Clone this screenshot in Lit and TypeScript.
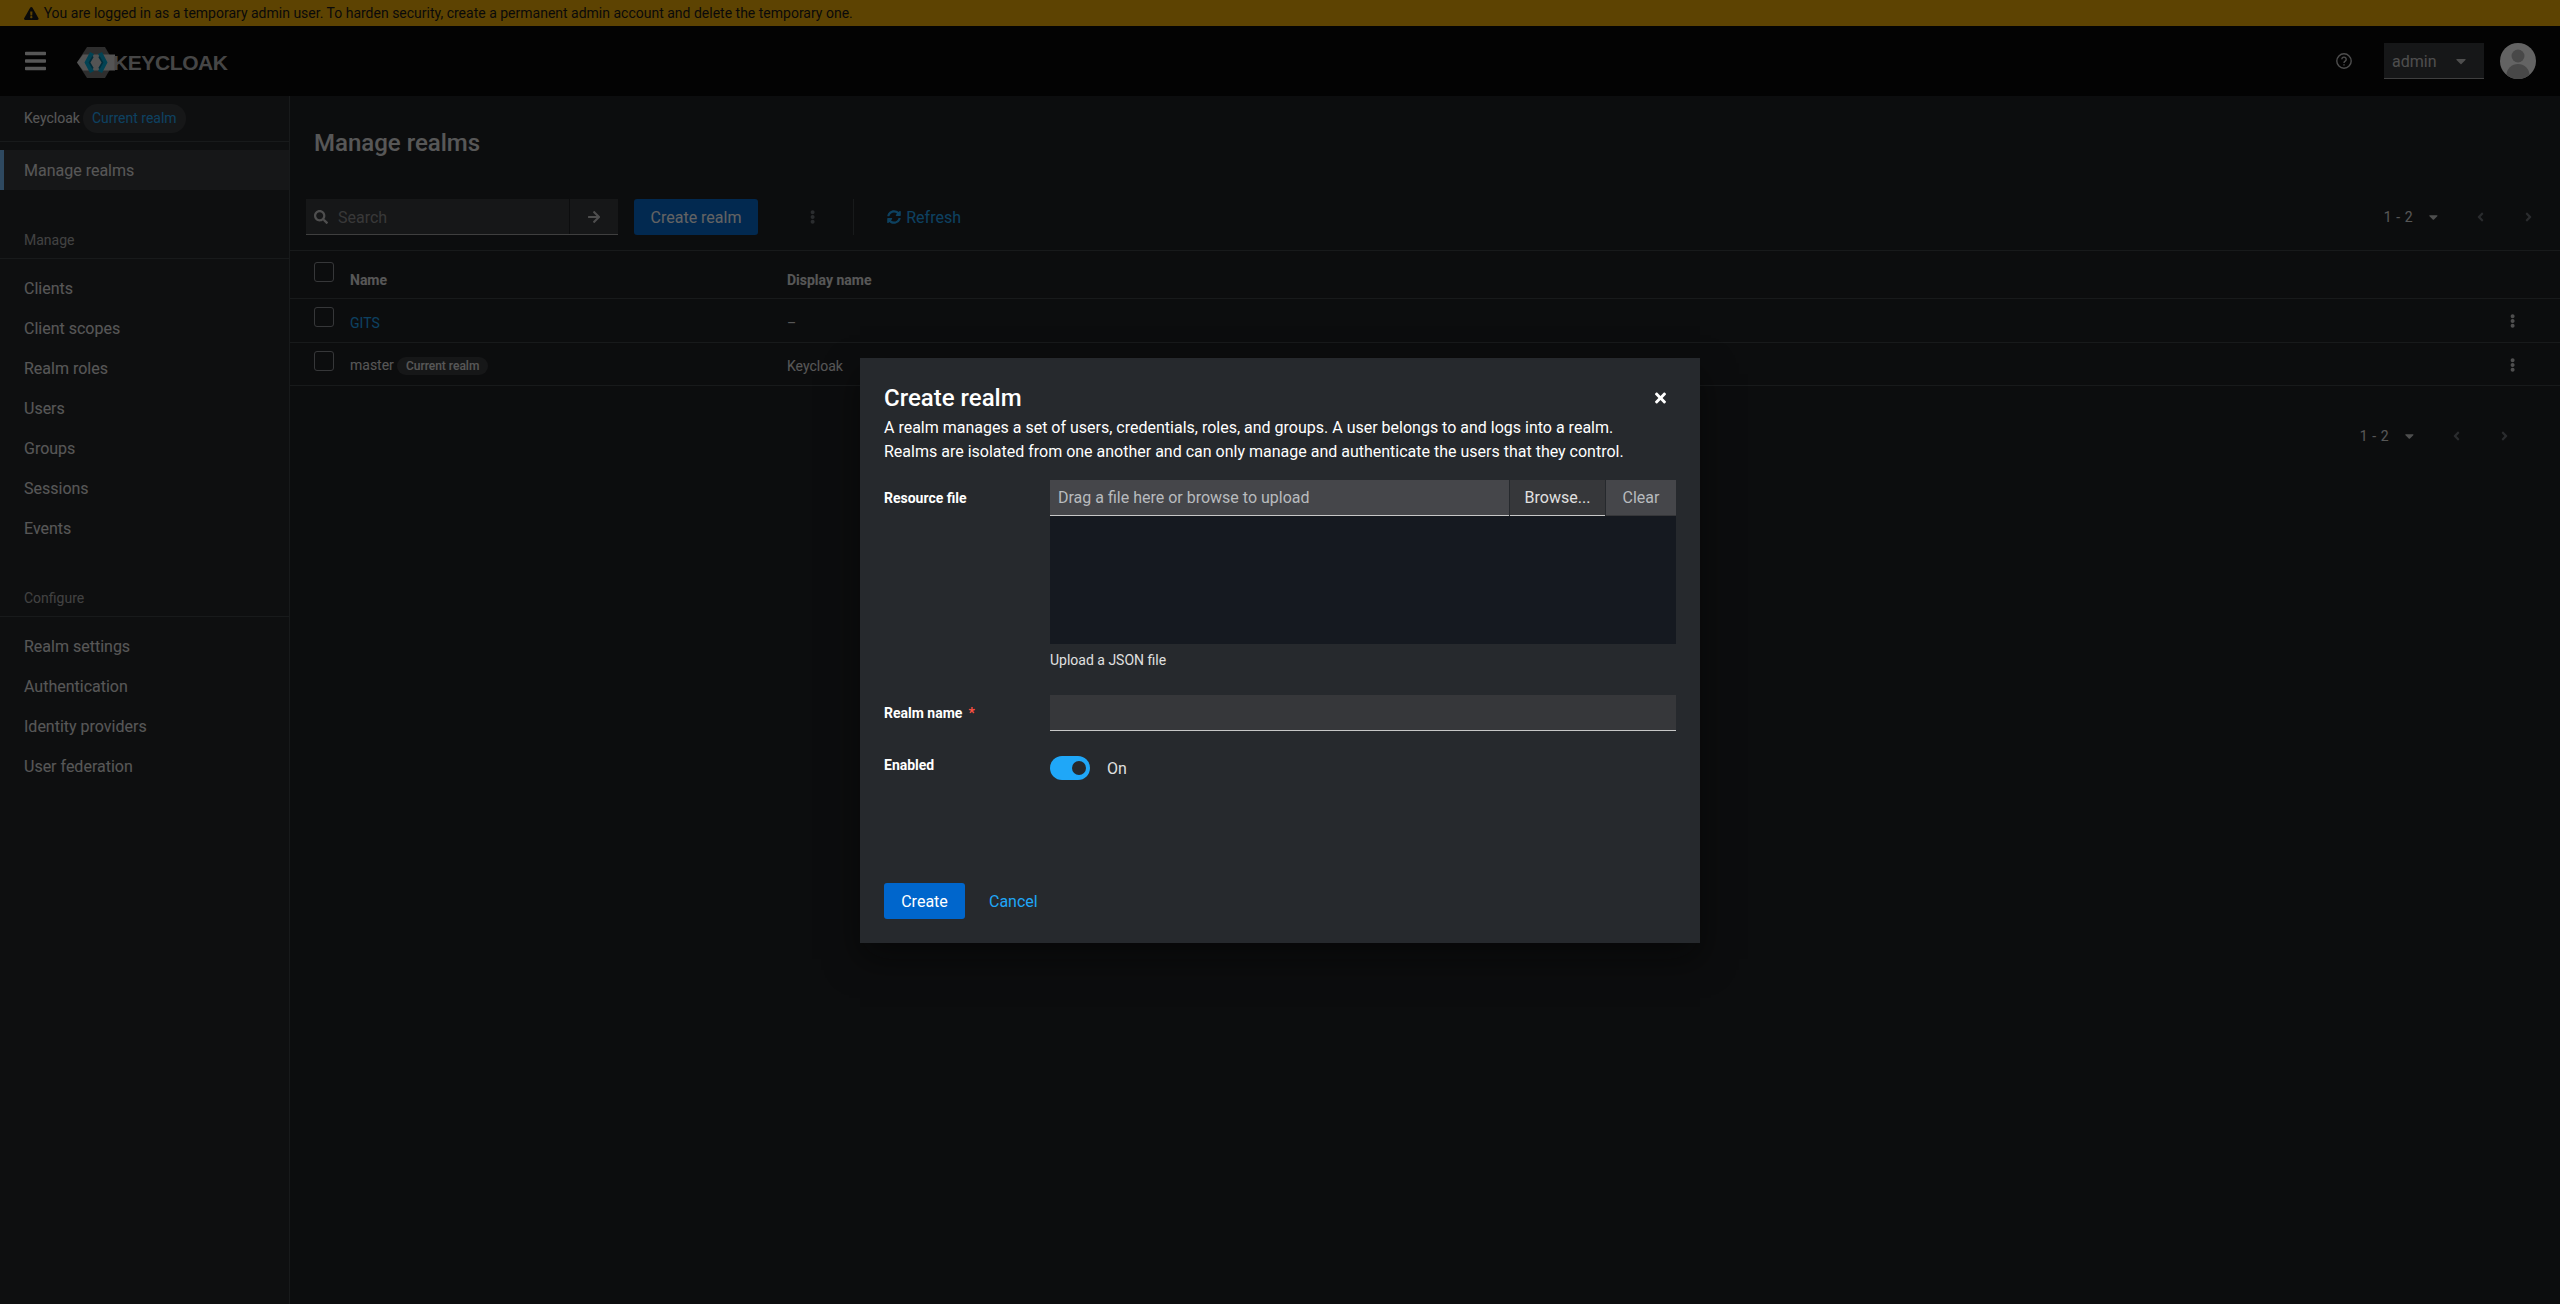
import { LitElement, html, css, svg } from "lit";
import { customElement } from "lit/decorators.js";

// FontAwesome paths, same ones PatternFly ships
const ICONS: Record<string, [string, string]> = {
  warn: ["0 0 576 512", "M569.517 440.013C587.975 472.007 564.806 512 527.94 512H48.054c-36.937 0-59.999-40.055-41.577-71.987L246.423 24.035c18.467-32.009 64.72-31.951 83.154 0l239.94 416.028zM288 354c-25.405 0-46 20.595-46 46s20.595 46 46 46 46-20.595 46-46-20.595-46-46-46zm-43.673-165.346l7.418 136c.347 6.364 5.609 11.346 11.982 11.346h48.546c6.373 0 11.635-4.982 11.982-11.346l7.418-136c.375-6.874-5.098-12.654-11.982-12.654h-63.383c-6.884 0-12.356 5.78-11.981 12.654z"],
  bars: ["0 0 448 512", "M16 132h416c8.837 0 16-7.163 16-16V76c0-8.837-7.163-16-16-16H16C7.163 60 0 67.163 0 76v40c0 8.837 7.163 16 16 16zm0 160h416c8.837 0 16-7.163 16-16v-40c0-8.837-7.163-16-16-16H16c-8.837 0-16 7.163-16 16v40c0 8.837 7.163 16 16 16zm0 160h416c8.837 0 16-7.163 16-16v-40c0-8.837-7.163-16-16-16H16c-8.837 0-16 7.163-16 16v40c0 8.837 7.163 16 16 16z"],
  search: ["0 0 512 512", "M505 442.7L405.3 343c-4.5-4.5-10.6-7-17-7H372c27.6-35.3 44-79.7 44-128C416 93.1 322.9 0 208 0S0 93.1 0 208s93.1 208 208 208c48.3 0 92.7-16.4 128-44v16.3c0 6.4 2.5 12.5 7 17l99.7 99.7c9.4 9.4 24.6 9.4 33.9 0l28.3-28.3c9.4-9.4 9.4-24.6.1-34zM208 336c-70.7 0-128-57.2-128-128 0-70.7 57.2-128 128-128 70.7 0 128 57.2 128 128 0 70.7-57.2 128-128 128z"],
  arrow: ["0 0 448 512", "M190.5 66.9l22.2-22.2c9.4-9.4 24.6-9.4 33.9 0L441 239c9.4 9.4 9.4 24.6 0 33.9L246.6 467.3c-9.4 9.4-24.6 9.4-33.9 0l-22.2-22.2c-9.5-9.5-9.3-25 .4-34.3L311.4 296H24c-13.3 0-24-10.7-24-24v-32c0-13.3 10.7-24 24-24h287.4L190.9 101.2c-9.8-9.3-10-24.8-.4-34.3z"],
  caret: ["0 0 320 512", "M31.3 192h257.3c17.8 0 26.7 21.5 14.1 34.1L174.1 354.8c-7.8 7.8-20.5 7.8-28.3 0L17.2 226.1C4.6 213.5 13.5 192 31.3 192z"],
  left: ["0 0 256 512", "M31.7 239l136-136c9.4-9.4 24.6-9.4 33.9 0l22.6 22.6c9.4 9.4 9.4 24.6 0 33.9L127.9 256l96.4 96.4c9.4 9.4 9.4 24.6 0 33.9L201.7 409c-9.4 9.4-24.6 9.4-33.9 0l-136-136c-9.5-9.4-9.5-24.6-.1-34z"],
  right: ["0 0 256 512", "M224.3 273l-136 136c-9.4 9.4-24.6 9.4-33.9 0l-22.6-22.6c-9.4-9.4-9.4-24.6 0-33.9l96.4-96.4-96.4-96.4c-9.4-9.4-9.4-24.6 0-33.9L54.3 103c9.4-9.4 24.6-9.4 33.9 0l136 136c9.5 9.4 9.5 24.6.1 34z"],
  kebab: ["0 0 192 512", "M96 184c39.8 0 72 32.2 72 72s-32.2 72-72 72-72-32.2-72-72 32.2-72 72-72zM24 80c0 39.8 32.2 72 72 72s72-32.2 72-72S135.8 8 96 8 24 40.2 24 80zm0 352c0 39.8 32.2 72 72 72s72-32.2 72-72-32.2-72-72-72-72 32.2-72 72z"],
  times: ["0 0 352 512", "M242.72 256l100.07-100.07c12.28-12.28 12.28-32.19 0-44.48l-22.24-22.24c-12.28-12.28-32.19-12.28-44.48 0L176 189.28 75.93 89.21c-12.28-12.28-32.19-12.28-44.48 0L9.21 111.45c-12.28 12.28-12.28 32.19 0 44.48L109.28 256 9.21 356.07c-12.28 12.28-12.28 32.19 0 44.48l22.24 22.24c12.28 12.28 32.2 12.28 44.48 0L176 322.72l100.07 100.07c12.28 12.28 32.2 12.28 44.48 0l22.24-22.24c12.28-12.28 12.28-32.19 0-44.48L242.72 256z"],
  sync: ["0 0 512 512", "M370.72 133.28C339.458 104.008 298.888 87.962 255.848 88c-77.458.068-144.328 53.178-162.791 126.85-1.344 5.363-6.122 9.15-11.651 9.15H24.103c-7.498 0-13.194-6.807-11.807-14.176C33.933 94.924 134.813 8 256 8c66.448 0 126.791 26.136 171.315 68.685L463.03 40.97C478.149 25.851 504 36.559 504 57.941V192c0 13.255-10.745 24-24 24H345.941c-21.382 0-32.09-25.851-16.971-40.971l41.75-41.749zM32 296h134.059c21.382 0 32.09 25.851 16.971 40.971l-41.75 41.75c31.262 29.273 71.835 45.319 114.876 45.28 77.418-.07 144.315-53.144 162.787-126.849 1.344-5.363 6.122-9.15 11.651-9.15h57.304c7.498 0 13.194 6.807 11.807 14.176C478.067 417.076 377.187 504 256 504c-66.448 0-126.791-26.136-171.315-68.685L48.97 471.03C33.851 486.149 8 475.441 8 454.059V320c0-13.255 10.745-24 24-24z"],
};

function icon(name: string, size: number) {
  const [box, d] = ICONS[name];
  const [, , w, h] = box.split(" ").map(Number);
  return html`<svg width=${(size * w) / h} height=${size} viewBox=${box} fill="currentColor">${svg`<path d=${d}></path>`}</svg>`;
}

const MANAGE = ["Clients", "Client scopes", "Realm roles", "Users", "Groups", "Sessions", "Events"];
const CONFIGURE = ["Realm settings", "Authentication", "Identity providers", "User federation"];

@customElement("app-root")
export class AppRoot extends LitElement {
  static styles = css`
    :host {
      display: flex;
      flex-direction: column;
      height: 1304px;
      overflow: hidden;
      background: #1b1d21;
      color: #e0e0e0;
      font-family: Roboto, sans-serif;
      font-size: 16px;
      position: relative;
    }
    svg { display: block; flex: none; }

    /* ---- banner + masthead ---- */
    .banner {
      height: 26px;
      flex: none;
      background: #f0ab00;
      color: #151515;
      display: flex;
      align-items: center;
      gap: 5px;
      padding-left: 24px;
      font-size: 14px;
    }
    .masthead {
      height: 70px;
      flex: none;
      background: #030303;
      display: flex;
      align-items: center;
      padding: 0 24px 0 25px;
      color: #e0e0e0;
    }
    .logo { display: flex; align-items: center; margin-left: 30px; padding-top: 3px; }
    .logo-text {
      font-family: "Liberation Sans", sans-serif;
      font-weight: 700;
      font-size: 21px;
      letter-spacing: -0.4px;
      color: #b4b4b4;
      margin-left: -2px;
    }
    .spacer { flex: 1; }
    .help { color: #c7c7c7; margin-right: 32px; }
    .user-select {
      width: 100px;
      height: 36px;
      box-sizing: border-box;
      background: #36373a;
      border-bottom: 1px solid #a0a0a0;
      display: flex;
      align-items: center;
      padding: 1px 0 0 8px;
      gap: 20px;
      color: #c7c7c7;
    }
    .avatar { margin-left: 16px; }

    /* ---- page body ---- */
    .body { flex: 1; display: flex; min-height: 0; }
    .sidebar {
      width: 290px;
      flex: none;
      box-sizing: border-box;
      background: #212427;
      border-right: 1px solid #3c3f42;
    }
    .realm-head {
      height: 46px;
      box-sizing: border-box;
      padding: 8px 0 0 24px;
      display: flex;
      align-items: flex-start;
      gap: 3px;
      font-size: 14px;
      border-bottom: 1px solid #3c3f42;
      line-height: 29px;
    }
    .realm-pill {
      height: 29px;
      padding: 0 9px;
      border-radius: 15px;
      background: #36373a;
      color: #1fa7f8;
    }
    .nav-current {
      margin-top: 8px;
      height: 40px;
      display: flex;
      align-items: center;
      background: #36373a;
      border-left: 4px solid #73bcf7;
      padding-left: 20px;
    }
    .group-title {
      height: 37px;
      margin-top: 32px;
      box-sizing: border-box;
      padding: 10px 0 0 24px;
      font-size: 14px;
      color: #a9a9a9;
      border-bottom: 1px solid #3c3f42;
    }
    .group-title + .nav-list { padding-top: 9px; }
    .nav-item {
      height: 40px;
      display: flex;
      align-items: center;
      padding-left: 24px;
    }

    .main { flex: 1; min-width: 0; }
    .title {
      margin: 0;
      height: 95px;
      padding: 26px 0 0 24px;
      box-sizing: border-box;
      font-size: 24px;
      font-weight: 500;
      line-height: 42px;
    }
    .toolbar {
      height: 60px;
      box-sizing: border-box;
      padding: 8px 28px 0 16px;
      display: flex;
      align-items: flex-start;
      border-bottom: 1px solid #3c3f42;
    }
    .search {
      display: flex;
      width: 312px;
      height: 36px;
      background: #36373a;
      border-bottom: 1px solid #a0a0a0;
      box-sizing: border-box;
      color: #c7c7c7;
    }
    .search-field {
      flex: 1;
      display: flex;
      align-items: center;
      gap: 10px;
      padding: 1px 0 0 8px;
      color: #8f8f8f;
      border-right: 1px solid #1b1d21;
    }
    .search-field svg { color: #c7c7c7; }
    .search-go { width: 48px; display: flex; align-items: center; justify-content: center; }
    .btn-primary {
      height: 36px;
      display: flex;
      align-items: center;
      justify-content: center;
      border-radius: 3px;
      background: #06c;
      color: #fff;
      font-size: 16px;
    }
    .btn-create { width: 124px; margin-left: 16px; }
    .kebab { color: #c7c7c7; display: flex; align-items: center; height: 36px; }
    .tool-kebab { margin: 0 38px 0 52px; color: #6a6e73; }
    .tool-sep { width: 1px; height: 36px; background: #3c3f42; }
    .refresh {
      display: flex;
      align-items: center;
      gap: 5px;
      height: 36px;
      margin-left: 33px;
      color: #1fa7f8;
    }
    .pager {
      margin-left: auto;
      display: flex;
      align-items: center;
      height: 36px;
      font-size: 14px;
      color: #e0e0e0;
      letter-spacing: 0.6px;
    }
    .pager-caret { margin: 0 39px 0 16px; color: #c7c7c7; }
    .pager-next { margin-left: 41px; }
    .pager svg.off { color: #6a6e73; }
    .bottom-pager { padding: 32px 52px 0 0; display: flex; justify-content: flex-end; }
    .bottom-pager .pager { margin-left: 0; }

    .row {
      display: grid;
      grid-template-columns: 60px 437px 1fr 60px;
      align-items: center;
      box-sizing: border-box;
      border-bottom: 1px solid #3c3f42;
      font-size: 14px;
    }
    .row.head { height: 48px; font-weight: 700; }
    .row.data { height: 43.5px; }
    .row.head .cell { padding-top: 10px; }
    .row.data .cell { padding-top: 5px; }
    .check {
      width: 20px;
      height: 20px;
      box-sizing: border-box;
      margin: -6px 0 0 24px;
      border: 1px solid #8a8d90;
      border-radius: 3px;
    }
    .link { color: #1fa7f8; }
    .chip {
      display: inline-block;
      margin-left: 3px;
      padding: 0 9px;
      height: 18px;
      line-height: 18px;
      border-radius: 9px;
      background: #36373a;
      font-size: 12px;
      font-weight: 500;
    }
    .row .kebab { height: auto; justify-content: flex-start; padding: 2px 0 0 10px; }

    /* ---- modal ---- */
    .scrim { position: absolute; inset: 0; background: rgba(3, 3, 3, 0.62); }
    .modal {
      position: absolute;
      left: 860px;
      top: 358px;
      width: 840px;
      height: 585px;
      box-sizing: border-box;
      padding: 24px 24px 0;
      background: #26292d;
      box-shadow: 0 16px 32px rgba(3, 3, 3, 0.5);
      color: #e0e0e0;
      display: flex;
      flex-direction: column;
    }
    .modal-head { display: flex; align-items: center; justify-content: space-between; height: 31px; padding: 1px 10px 0 0; box-sizing: border-box; }
    .modal-title { margin: 0; font-size: 24px; font-weight: 500; color: #fff; line-height: 30px; }
    .modal-close { color: #fff; }
    .modal-desc { margin: 3px 0 0; line-height: 24px; color: #fff; }
    .form {
      margin-top: 16px;
      display: grid;
      grid-template-columns: 166px 626px;
      font-size: 14px;
      align-items: start;
    }
    .label { font-weight: 700; color: #fff; }
    .label-file { padding-top: 10px; }
    .req { color: #fe5142; margin-left: 6px; }
    .upload-row { display: flex; height: 36px; box-sizing: border-box; font-size: 16px; }
    .upload-name {
      flex: 1;
      display: flex;
      align-items: center;
      padding-left: 8px;
      background: #45464a;
      border-bottom: 1px solid #c7c7c7;
      color: #b8bbbe;
    }
    .upload-browse, .upload-clear {
      display: flex;
      align-items: center;
      justify-content: center;
      margin-left: 1px;
    }
    .upload-browse { width: 95px; background: #36373a; border-bottom: 1px solid #c7c7c7; color: #e0e0e0; }
    .upload-clear { width: 70px; background: #45464a; border-bottom: 1px solid #36373a; color: #b8bbbe; }
    .upload-area { height: 128px; background: #151920; }
    .helper { margin-top: 6px; line-height: 20px; color: #e0e0e0; }
    .label-realm { margin-top: 25px; height: 36px; display: flex; align-items: center; }
    .realm-input {
      margin-top: 25px;
      height: 36px;
      box-sizing: border-box;
      background: #36373a;
      border-bottom: 1px solid #c7c7c7;
    }
    .label-enabled { margin-top: 24px; line-height: 20px; }
    .toggle-row { margin-top: 25px; display: flex; align-items: center; gap: 17px; font-size: 16px; }
    .toggle {
      width: 40px;
      height: 24px;
      border-radius: 12px;
      background: #1fa7f8;
      display: flex;
      align-items: center;
      justify-content: flex-end;
      padding-right: 4px;
      box-sizing: border-box;
    }
    .knob { width: 14px; height: 14px; border-radius: 50%; background: #26292d; margin-top: -1px; }
    .modal-foot { margin-top: auto; padding-bottom: 24px; display: flex; align-items: center; gap: 24px; }
    .btn-confirm { width: 81px; }
    .cancel { color: #1fa7f8; }
  `;

  private logo() {
    return html`<svg width="39" height="31" viewBox="0 0 39 31" fill="none">
      <polygon points="1,15.5 11,0 29,0 38,15.5 29,31 11,31" fill="#737373"></polygon>
      <polygon points="1,15.5 7,7.5 39,7.5 39,23.5 7,23.5" fill="#d8d8d8"></polygon>
      <polyline points="16,6 11,15.5 16,25" stroke="#00a9d6" stroke-width="4.5"></polyline>
      <polyline points="24,6 29,15.5 24,25" stroke="#00a9d6" stroke-width="4.5"></polyline>
      <polyline points="17,9.5 13.5,15.5 17,21.5" stroke="#006f92" stroke-width="1.6"></polyline>
      <polyline points="23,9.5 26.5,15.5 23,21.5" stroke="#006f92" stroke-width="1.6"></polyline>
    </svg>`;
  }

  private avatar() {
    return html`<svg class="avatar" width="36" height="36" viewBox="0 0 36 36">
      <defs><clipPath id="av"><circle cx="18" cy="18" r="18"></circle></clipPath></defs>
      <g clip-path="url(#av)">
        <rect width="36" height="36" fill="#fff"></rect>
        <circle cx="18" cy="13" r="6.5" fill="#b8b8b8"></circle>
        <ellipse cx="18" cy="32" rx="11.5" ry="11" fill="#b8b8b8"></ellipse>
      </g>
    </svg>`;
  }

  private pager() {
    return html`<div class="pager">
      <span>1 - 2</span>
      <span class="pager-caret">${icon("caret", 14)}</span>
      <svg class="off" width="7" height="14" viewBox="0 0 256 512" fill="currentColor"><path d=${ICONS.left[1]}></path></svg>
      <svg class="off pager-next" width="7" height="14" viewBox="0 0 256 512" fill="currentColor"><path d=${ICONS.right[1]}></path></svg>
    </div>`;
  }

  render() {
    return html`
      <div class="banner">${icon("warn", 13)}<span>You are logged in as a temporary admin user. To harden security, create a permanent admin account and delete the temporary one.</span></div>

      <header class="masthead">
        ${icon("bars", 24)}
        <div class="logo">${this.logo()}<span class="logo-text">KEYCLOAK</span></div>
        <div class="spacer"></div>
        <svg class="help" width="16" height="16" viewBox="0 0 16 16" fill="none" stroke="currentColor" stroke-width="1.4">
          <circle cx="8" cy="8" r="7.2"></circle>
          <path d="M5.8 6.3a2.2 2.2 0 1 1 3.4 1.9c-.8.5-1.2.9-1.2 1.7"></path>
          <path d="M8 11.2v1.3"></path>
        </svg>
        <div class="user-select"><span>admin</span>${icon("caret", 16)}</div>
        ${this.avatar()}
      </header>

      <div class="body">
        <nav class="sidebar">
          <div class="realm-head"><span>Keycloak</span><span class="realm-pill">Current realm</span></div>
          <div class="nav-current">Manage realms</div>
          <div class="group-title">Manage</div>
          <div class="nav-list">${MANAGE.map((n) => html`<div class="nav-item">${n}</div>`)}</div>
          <div class="group-title">Configure</div>
          <div class="nav-list">${CONFIGURE.map((n) => html`<div class="nav-item">${n}</div>`)}</div>
        </nav>

        <main class="main">
          <h1 class="title">Manage realms</h1>
          <div class="toolbar">
            <div class="search">
              <div class="search-field">${icon("search", 14)}<span>Search</span></div>
              <div class="search-go">${icon("arrow", 14)}</div>
            </div>
            <div class="btn-primary btn-create">Create realm</div>
            <div class="kebab tool-kebab">${icon("kebab", 14)}</div>
            <div class="tool-sep"></div>
            <div class="refresh">${icon("sync", 14)}<span>Refresh</span></div>
            ${this.pager()}
          </div>
          <div class="row head"><div class="check"></div><div class="cell">Name</div><div class="cell">Display name</div><div></div></div>
          <div class="row data">
            <div class="check"></div><div class="cell link">GITS</div><div class="cell">–</div>
            <div class="kebab">${icon("kebab", 14)}</div>
          </div>
          <div class="row data">
            <div class="check"></div><div class="cell">master<span class="chip">Current realm</span></div><div class="cell">Keycloak</div>
            <div class="kebab">${icon("kebab", 14)}</div>
          </div>
          <div class="bottom-pager">${this.pager()}</div>
        </main>
      </div>

      <div class="scrim"></div>
      <section class="modal">
        <div class="modal-head">
          <h2 class="modal-title">Create realm</h2>
          <span class="modal-close">${icon("times", 16)}</span>
        </div>
        <p class="modal-desc">A realm manages a set of users, credentials, roles, and groups. A user belongs to and logs into a realm.<br />Realms are isolated from one another and can only manage and authenticate the users that they control.</p>
        <div class="form">
          <div class="label label-file">Resource file</div>
          <div>
            <div class="upload-row">
              <div class="upload-name">Drag a file here or browse to upload</div>
              <div class="upload-browse">Browse...</div>
              <div class="upload-clear">Clear</div>
            </div>
            <div class="upload-area"></div>
            <div class="helper">Upload a JSON file</div>
          </div>
          <div class="label label-realm">Realm name<span class="req">*</span></div>
          <div class="realm-input"></div>
          <div class="label label-enabled">Enabled</div>
          <div class="toggle-row"><div class="toggle"><div class="knob"></div></div><span>On</span></div>
        </div>
        <div class="modal-foot">
          <div class="btn-primary btn-confirm">Create</div>
          <div class="cancel">Cancel</div>
        </div>
      </section>
    `;
  }
}
